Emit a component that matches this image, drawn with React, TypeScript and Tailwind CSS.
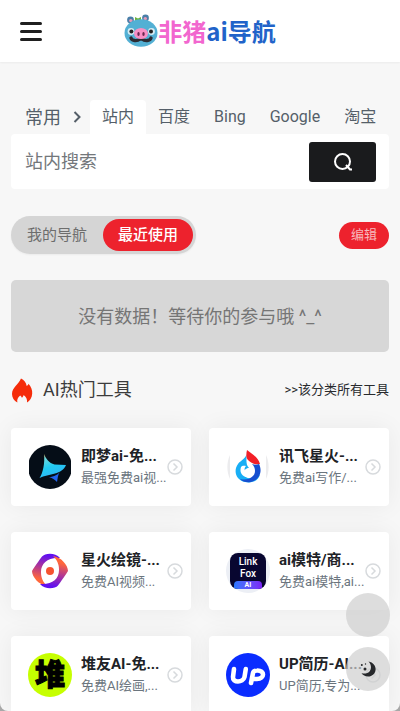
import React from "react";

const PigLogo = () => (
  <svg viewBox="0 0 34 34" className="h-[34px] w-[34px] shrink-0" aria-hidden="true">
    <circle cx="6.5" cy="6" r="3.4" fill="#4a7fa8" />
    <circle cx="6.8" cy="6.6" r="1.7" fill="#e79ab8" />
    <circle cx="21.5" cy="4" r="3.4" fill="#4a7fa8" />
    <circle cx="21.3" cy="4.6" r="1.7" fill="#e79ab8" />
    <path d="M11 3l3 1.5L17 3v5h-6z" fill="#6cb33e" />
    <ellipse cx="17" cy="19" rx="16.5" ry="13.8" fill="#53b0d4" />
    <circle cx="7" cy="17.5" r="3.4" fill="#d5ecf4" />
    <circle cx="27.5" cy="17.5" r="3.4" fill="#d5ecf4" />
    <circle cx="7.4" cy="17.5" r="2" fill="#222" />
    <circle cx="27" cy="17.5" r="2" fill="#222" />
    <path d="M7 24c1 3 6 3.500 9 1h2c3 2.500 8 2 9-1" fill="none" stroke="#2b2b33" strokeWidth="3.400" strokeLinecap="round" />
    <ellipse cx="17" cy="19.500" rx="7" ry="5.500" fill="#f78fc4" />
    <ellipse cx="14.500" cy="20" rx="1.200" ry="2" fill="#6b2750" />
    <ellipse cx="19.500" cy="20" rx="1.200" ry="2" fill="#6b2750" />
  </svg>
);

const Flame = () => (
  <svg viewBox="0 0 22 25" className="h-[25px] w-[22px]" aria-hidden="true">
    <path
      d="M10 .5c3 1.300 5.200 4 5.700 7.500 1-.4 1.600-1.100 1.800-2.200 2.600 3 4 6.400 3.700 10-.2 4-2.300 7.200-5.200 8.700.4-3-.8-5.600-3.400-7.500-.2 1.300-.8 2.100-1.700 2.700-.4-1-.9-1.700-1.700-2.200-2.400 2-3.500 4.200-2.800 7C3 22.700 1 19.600 1 16c0-3.500 1.800-5.500 3.600-7.900C6.300 5.900 8.600 3.700 10 .5z"
      fill="#f52c0a"
    />
  </svg>
);

const Jimeng = () => (
  <svg viewBox="0 0 44 44" className="h-11 w-11" aria-hidden="true">
    <defs>
      <linearGradient id="jm" x1="0" y1="0" x2="0.4" y2="1">
        <stop offset="0" stopColor="#ff9d1c" />
        <stop offset="0.22" stopColor="#6fd8dc" />
        <stop offset="0.6" stopColor="#21cbf2" />
        <stop offset="1" stopColor="#30b5f5" />
      </linearGradient>
      <clipPath id="jmClip"><rect x="1" y="0" width="42" height="44" /></clipPath>
    </defs>
    <circle cx="22" cy="22" r="22" fill="#050d17" clipPath="url(#jmClip)" />
    <path d="M16 9c2 5 5 9 10.500 10.500L38 20c-2 5-6 7-11 8.500-5 1.500-11 2-15.500 4.500C15 28 17 18 16 9z" fill="url(#jm)" />
    <path d="M33 26c-3.500 3-3 7-4 11-2-2-4-4-8-5 5 0 9-2.500 12-6z" fill="#2264f0" />
  </svg>
);

const Xunfei = () => (
  <svg viewBox="0 0 44 44" className="h-11 w-11" aria-hidden="true">
    <path d="M4 10C.5 17 .5 27 4 34zM40 10c3.500 7 3.500 17 0 24z" fill="#ececee" />
    <path d="M20.500 6C22 13 15 15 12 19c-5 7-2 16 7 18 8 1.600 14-2 15-8-4 4-10 6-14 3-4-3-2-9 3-9-4-4-2-10-2.500-17z" fill="#18aef5" />
    <path d="M21 5c5 4 11 7 13 14-5 1-9-1-12-4-2-2-2-5-1-10z" fill="#f31f27" />
    <path d="M33 19c4 8 0 16-8 18-4 .8-8 0-11-3 8 2 15-2 15-8 0-3-1-5-3-7 2.500 1 5 1 7 0z" fill="#164fd0" />
    <path d="M15 22c-2 6 2 11 8 10 5-1 6-8 1-9 1 3-1 5-3 4-3-1-3-4-1-6-2-.5-4-.5-5 1z" fill="#fff" />
  </svg>
);

const apertureBlade =
  "M4 22c1-2 8-12 10-14.500C17 4 27 3 32 9 20 8 13 14 13 23c0 6 2 10 6 14C11 36 4 28 4 22z";

const Huijing = () => (
  <svg viewBox="0 0 44 44" className="h-11 w-11" aria-hidden="true">
    <defs>
      <linearGradient id="hj" x1="0.5" y1="0" x2="0.3" y2="1">
        <stop offset="0.05" stopColor="#6210f0" />
        <stop offset="0.5" stopColor="#c03f82" />
        <stop offset="0.8" stopColor="#ff673c" />
      </linearGradient>
    </defs>
    <path d={apertureBlade} fill="url(#hj)" />
    <path d={apertureBlade} fill="url(#hj)" transform="rotate(180 22 22)" />
    <circle cx="22" cy="22" r="4" fill="#f6532f" />
  </svg>
);

const LinkFox = () => (
  <span className="flex h-11 w-11 items-center justify-center rounded-full bg-[#eceff5]">
    <span className="flex h-9 w-9 flex-col items-center overflow-hidden rounded-lg bg-[#080630] pt-[3px] text-[10px] leading-3 font-medium text-white">
      <span>Link</span>
      <span>Fox</span>
      <span className="mt-auto w-7 rounded-t bg-gradient-to-r from-[#2477ff] to-[#7a22f5] text-center text-[7px] leading-[8px] font-bold">AI</span>
    </span>
  </span>
);

const Duiyou = () => (
  <span className="flex h-11 w-11 items-center justify-center rounded-full bg-[#c6ff00] text-[30px] leading-none font-black text-black [-webkit-text-stroke:1px_black]">
    堆
  </span>
);

const Up = () => (
  <svg viewBox="0 0 44 44" className="h-11 w-11" role="img" aria-label="UP">
    <circle cx="22" cy="22" r="22" fill="#0a2cff" />
    <g fill="none" stroke="#fff" strokeWidth="4.600" strokeLinecap="round" strokeLinejoin="round">
      <path d="M8 16l-1 8c-.6 6 10 6 11.500 0l1.300-8" />
      <path d="M25 30l2-10c.5-2 1.500-2.500 4-2.500 8-.5 8 8.500 0 8.500h-3" />
    </g>
  </svg>
);

const tools = [
  { title: "即梦ai-免...", text: "最强免费ai视...", Icon: Jimeng },
  { title: "讯飞星火-...", text: "免费ai写作/...", Icon: Xunfei },
  { title: "星火绘镜-...", text: "免费AI视频...", Icon: Huijing },
  { title: "ai模特/商...", text: "免费ai模特,ai...", Icon: LinkFox },
  { title: "堆友AI-免...", text: "免费AI绘画,...", Icon: Duiyou },
  { title: "UP简历-AI...", text: "UP简历,专为...", Icon: Up },
];

const engines = ["站内", "百度", "Bing", "Google", "淘宝"];

export default function App() {
  return (
    <div className="h-screen bg-[#a8a8a8] font-[Roboto,'Noto_Sans_CJK_SC',sans-serif]">
      <div className="relative flex h-full flex-col overflow-hidden rounded-b-lg bg-[#f7f7f7]">
        <header className="grid h-[62px] shrink-0 grid-cols-[1fr_auto_1fr] items-center bg-white px-5 shadow-xs">
          <button type="button" aria-label="菜单" className="flex w-[22px] flex-col gap-[5px]">
            <span className="h-[3px] rounded-full bg-[#1f1f1f]" />
            <span className="h-[3px] rounded-full bg-[#1f1f1f]" />
            <span className="h-[3px] rounded-full bg-[#1f1f1f]" />
          </button>
          <a href="#home" className="flex items-center font-['Noto_Sans_CJK_SC',sans-serif] text-[24px] leading-8 font-bold text-[#2163c9]">
            <PigLogo />
            <span className="text-[#f266cf]">非猪</span>
            <span>ai导航</span>
          </a>
        </header>

        <main className="min-h-0 flex-1 overflow-y-auto px-[11px] pt-[38px] [scrollbar-width:none]">
          <form onSubmit={(e) => e.preventDefault()}>
            <div className="flex h-[34px] items-center text-[16px] whitespace-nowrap text-[#555f69]">
              <button type="button" className="flex w-[79px] shrink-0 items-center gap-3 pl-[14px] text-[18px]">
                常用
                <svg viewBox="0 0 8 12" className="h-3 w-2" fill="none" stroke="currentColor" strokeWidth="2" aria-hidden="true">
                  <path d="M1.500 1l5 5-5 5" />
                </svg>
              </button>
              {engines.map((name, i) => (
                <button
                  type="button"
                  key={name}
                  className={i === 0 ? "h-full rounded-t-sm bg-white px-3" : "h-full px-3"}
                >
                  {name}
                </button>
              ))}
            </div>
            <div className="flex h-[55px] items-center rounded-sm bg-white pr-[13px] pl-[14px]">
              <input
                aria-label="站内搜索"
                placeholder="站内搜索"
                className="min-w-0 flex-1 bg-transparent text-[18px] outline-none placeholder:text-[#73777b]"
              />
              <button type="submit" aria-label="搜索" className="flex h-10 w-[67px] items-center justify-center rounded-[3px] bg-[#1a1b1d] text-white">
                <svg viewBox="0 0 20 20" className="h-5 w-5" fill="none" stroke="currentColor" strokeWidth="2" aria-hidden="true">
                  <circle cx="9.500" cy="9.500" r="7.500" />
                  <path d="M13 13l4 4.500h2" />
                </svg>
              </button>
            </div>
          </form>

          <div className="mt-[27px] flex items-center justify-between">
            <div className="flex h-[38px] items-center rounded-full bg-[#d5d5d5] pr-[3px] text-[15px] shadow-xs">
              <button type="button" className="px-4 text-[#6d6d6d]">我的导航</button>
              <button type="button" className="h-8 rounded-full bg-[#ed222d] px-[15px] font-medium text-white">最近使用</button>
            </div>
            <button type="button" className="h-[27px] rounded-full bg-[#ed222d] px-3 text-[13px] text-[#f7b9bc]">编辑</button>
          </div>

          <p className="mt-[26px] flex h-[72px] items-center justify-center rounded-[5px] bg-[#d7d7d7] text-[18px] text-[#757575]">
            没有数据！等待你的参与哦 ^_^
          </p>

          <div className="mt-6 flex items-center justify-between">
            <h2 className="flex items-center gap-[10px] text-[18px] leading-7 text-[#3c3c3c]">
              <Flame />
              AI热门工具
            </h2>
            <a href="#all" className="text-[13px] text-[#282a2d]">&gt;&gt;该分类所有工具</a>
          </div>

          <div className="mt-6 grid grid-cols-2 gap-x-[18px] gap-y-[26px] pb-6">
            {tools.map(({ title, text, Icon }) => (
              <a
                key={title}
                href="#tool"
                className="flex h-[78px] items-center rounded-[4px] bg-white pr-2 pl-[17px] shadow-[0_0_24px_rgba(0,0,0,0.06)]"
              >
                <span className="shrink-0"><Icon /></span>
                <span className="ml-[9px] min-w-0 flex-1 whitespace-nowrap">
                  <strong className="block text-[15px] leading-[22px] font-bold text-[#202226]">{title}</strong>
                  <span className="block text-[13px] leading-[22px] text-[#6b757e]">{text}</span>
                </span>
                <svg viewBox="0 0 16 16" className="h-4 w-4 shrink-0" fill="none" stroke="#d7dadd" strokeWidth="1.500" aria-hidden="true">
                  <circle cx="8" cy="8" r="7" />
                  <path d="M6.500 4.500L10 8l-3.500 3.500" />
                </svg>
              </a>
            ))}
          </div>
        </main>

        <div className="absolute right-[10px] bottom-5 flex flex-col gap-[10px]">
          <button type="button" aria-label="回到顶部" className="h-11 w-11 rounded-full bg-[#cecece]/70" />
          <button type="button" aria-label="夜间模式" className="flex h-11 w-11 items-center justify-center rounded-full bg-[#cecece]/70">
            <svg viewBox="0 0 16 16" className="h-4 w-4" fill="#26282b" aria-hidden="true">
              <path d="M8.500.5C17 2 18 12 11 15c-3.500 1.500-8 0-9.500-3 2.500 1 6 .6 8-1.600C11.700 8 11.500 3.500 8.500.5z" />
              <circle cx="5" cy="8" r="1.500" />
              <circle cx="1.800" cy="4" r="1" />
              <circle cx="5.500" cy="3" r=".7" />
            </svg>
          </button>
        </div>
      </div>
    </div>
  );
}
